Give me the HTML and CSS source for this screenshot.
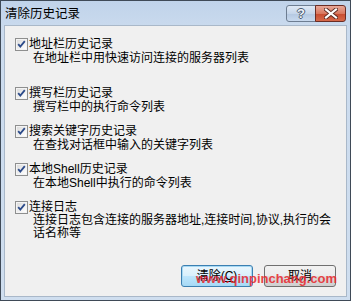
FILE: index.html
```html
<!DOCTYPE html>
<html lang="zh-CN">
<head>
<meta charset="utf-8">
<title>清除历史记录</title>
<link rel="stylesheet" href="styles.css">
</head>
<body>
<div class="window">
  <div class="titlebar">
    <span class="title">清除历史记录</span>
    <div class="caption-btns">
      <span class="cbtn help"><span class="q">?</span></span>
      <span class="cbtn close">
        <svg width="14" height="11" viewBox="0 0 14 11"><path d="M2 1.5 L12 9.5 M12 1.5 L2 9.5" stroke="#5a2a22" stroke-width="4" stroke-linecap="square"/><path d="M2 1.5 L12 9.5 M12 1.5 L2 9.5" stroke="#ffffff" stroke-width="2.2" stroke-linecap="square"/></svg>
      </span>
    </div>
  </div>
  <div class="client">
    <div class="options">
      <div class="opt first">
        <span class="cb"><svg width="13" height="13" viewBox="0 0 13 13"><defs><linearGradient id="g" x1="0" y1="0" x2="1" y2="1"><stop offset="0" stop-color="#dcdcdc"/><stop offset="1" stop-color="#ffffff"/></linearGradient></defs><rect x="0.5" y="0.5" width="12" height="12" fill="#f4f4f4" stroke="#8e8f8f"/><rect x="2" y="2" width="9" height="9" fill="url(#g)"/><path d="M3.2 6.2 L5.3 8.6 L9.8 3.2" fill="none" stroke="#2c4b8a" stroke-width="1.8"/></svg></span>
        <div class="text"><div class="label">地址栏历史记录</div><div class="desc">在地址栏中用快速访问连接的服务器列表</div></div>
      </div>
      <div class="opt">
        <span class="cb"><svg width="13" height="13" viewBox="0 0 13 13"><rect x="0.5" y="0.5" width="12" height="12" fill="#f4f4f4" stroke="#8e8f8f"/><rect x="2" y="2" width="9" height="9" fill="url(#g)"/><path d="M3.2 6.2 L5.3 8.6 L9.8 3.2" fill="none" stroke="#2c4b8a" stroke-width="1.8"/></svg></span>
        <div class="text"><div class="label">撰写栏历史记录</div><div class="desc">撰写栏中的执行命令列表</div></div>
      </div>
      <div class="opt">
        <span class="cb"><svg width="13" height="13" viewBox="0 0 13 13"><rect x="0.5" y="0.5" width="12" height="12" fill="#f4f4f4" stroke="#8e8f8f"/><rect x="2" y="2" width="9" height="9" fill="url(#g)"/><path d="M3.2 6.2 L5.3 8.6 L9.8 3.2" fill="none" stroke="#2c4b8a" stroke-width="1.8"/></svg></span>
        <div class="text"><div class="label">搜索关键字历史记录</div><div class="desc">在查找对话框中输入的关键字列表</div></div>
      </div>
      <div class="opt">
        <span class="cb"><svg width="13" height="13" viewBox="0 0 13 13"><rect x="0.5" y="0.5" width="12" height="12" fill="#f4f4f4" stroke="#8e8f8f"/><rect x="2" y="2" width="9" height="9" fill="url(#g)"/><path d="M3.2 6.2 L5.3 8.6 L9.8 3.2" fill="none" stroke="#2c4b8a" stroke-width="1.8"/></svg></span>
        <div class="text"><div class="label">本地Shell历史记录</div><div class="desc">在本地Shell中执行的命令列表</div></div>
      </div>
      <div class="opt">
        <span class="cb"><svg width="13" height="13" viewBox="0 0 13 13"><rect x="0.5" y="0.5" width="12" height="12" fill="#f4f4f4" stroke="#8e8f8f"/><rect x="2" y="2" width="9" height="9" fill="url(#g)"/><path d="M3.2 6.2 L5.3 8.6 L9.8 3.2" fill="none" stroke="#2c4b8a" stroke-width="1.8"/></svg></span>
        <div class="text"><div class="label">连接日志</div><div class="desc">连接日志包含连接的服务器地址,连接时间,协议,执行的会<br>话名称等</div></div>
      </div>
    </div>
    <div class="buttons">
      <button class="btn default">清除(<u>C</u>)</button>
      <button class="btn">取消</button>
    </div>
  </div>
  <div class="watermark">www.qinpinchang.com</div>
</div>
</body>
</html>
```
FILE: styles.css
```css
html, body {
  margin: 0;
  padding: 0;
  background: #ffffff;
}
body {
  font-family: "Liberation Sans", "Noto Sans CJK SC", sans-serif;
  font-size: 12px;
  color: #000;
}
.window {
  position: relative;
  width: 351px;
  height: 301px;
  box-sizing: border-box;
  border: 1px solid #3f4a57;
  background: linear-gradient(to bottom, #c0d3ea 0px, #cbdbee 30px, #cfdeef 100%);
  display: flex;
  flex-direction: column;
}
.titlebar {
  height: 24px;
  display: flex;
  align-items: flex-start;
  justify-content: space-between;
  flex: none;
}
.title {
  margin: 5px 0 0 4px;
  font-size: 12.5px;
  line-height: 16px;
  color: #000;
}
.caption-btns {
  display: flex;
  margin: 4px 4px 0 0;
}
.cbtn {
  height: 17px;
  box-sizing: border-box;
  border: 1px solid #6d7d91;
  display: flex;
  align-items: center;
  justify-content: center;
}
.help {
  width: 30px;
  border-radius: 3px 0 0 3px;
  background: linear-gradient(to bottom, #dfe9f5 0%, #c6d6ea 50%, #b4c8e1 51%, #c8d9ee 100%);
}
.help .q {
  font-family: "Liberation Sans", sans-serif;
  font-weight: bold;
  font-size: 13px;
  line-height: 13px;
  color: #eef3fa;
  text-shadow: 1px 0 0 #4c5a6e, -1px 0 0 #4c5a6e, 0 1px 0 #4c5a6e, 0 -1px 0 #4c5a6e;
}
.close {
  width: 31px;
  margin-left: -1px;
  border-color: #6b2d24;
  border-radius: 0 3px 3px 0;
  background: linear-gradient(to bottom, #e8a899 0%, #d9785f 50%, #c74b2f 51%, #d6694a 100%);
}
.client {
  flex: 1;
  margin: 0 3px 3px 3px;
  background: #f0f0f0;
  border: 1px solid #a9b8c9;
  display: flex;
  flex-direction: column;
  padding: 11px 10px 9px 10px;
}
.options {
  display: flex;
  flex-direction: column;
  gap: 10px;
}
.opt {
  display: flex;
  align-items: flex-start;
  gap: 1px;
}
.opt.first {
  margin-bottom: 11px;
}
.cb {
  width: 13px;
  height: 13px;
  margin-top: 1px;
  flex: none;
  display: block;
}
.cb svg {
  display: block;
}
.text {
  line-height: 14px;
}
.label {
  white-space: nowrap;
}
.desc {
  margin-left: 4px;
  white-space: nowrap;
}
.opt:last-child .desc {
  line-height: 13px;
}
.buttons {
  margin-top: auto;
  display: flex;
  justify-content: flex-end;
  gap: 11px;
}
.btn {
  width: 72px;
  height: 22px;
  box-sizing: border-box;
  border: 1px solid #707070;
  border-radius: 3px;
  background: linear-gradient(to bottom, #f2f2f2 0%, #ebebeb 50%, #dddddd 51%, #cfcfcf 100%);
  font-family: "Liberation Sans", "Noto Sans CJK SC", sans-serif;
  font-size: 12px;
  color: #000;
  padding: 0;
  line-height: 18px;
}
.btn u {
  text-decoration: underline;
}
.btn.default {
  border-color: #3c7fb1;
  box-shadow: inset 0 0 0 1px #a6d9f4;
  background: linear-gradient(to bottom, #eaf6fd 0%, #d9f0fc 50%, #bee6fd 51%, #a7d9f5 100%);
}
.watermark {
  position: absolute;
  left: 195px;
  top: 270px;
  font-family: "Liberation Sans", sans-serif;
  font-weight: bold;
  font-size: 13px;
  line-height: 16px;
  color: #e8262b;
  opacity: 0.85;
  white-space: nowrap;
}
```
